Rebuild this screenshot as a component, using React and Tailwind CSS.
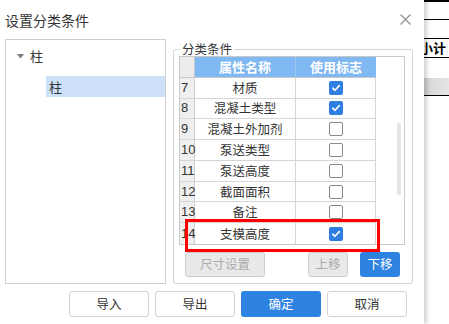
import React from 'react';

const rows = [
  { no: 7, name: '材质', used: true },
  { no: 8, name: '混凝土类型', used: true },
  { no: 9, name: '混凝土外加剂', used: false },
  { no: 10, name: '泵送类型', used: false },
  { no: 11, name: '泵送高度', used: false },
  { no: 12, name: '截面面积', used: false },
  { no: 13, name: '备注', used: false },
  { no: 14, name: '支模高度', used: true },
];

const cjk = { fontFamily: '"Noto Sans CJK SC", "Microsoft YaHei", sans-serif' };

const CheckBox = ({ checked }) =>
  checked ? (
    <div className="w-[14px] h-[14px] rounded-[2px] bg-[#2f7fe3] flex items-center justify-center">
      <svg width="10" height="10" viewBox="0 0 10 10">
        <path d="M1.8 5.2 L4 7.3 L8.3 2.6" stroke="white" strokeWidth="1.6" fill="none" strokeLinecap="round" strokeLinejoin="round" />
      </svg>
    </div>
  ) : (
    <div className="w-[14px] h-[14px] rounded-[2px] bg-white border border-[#8a8a8a]" />
  );

const App = () => {
  return (
    <div className="w-[449px] h-[324px] flex overflow-hidden bg-white text-[#333]" style={cjk}>
      {/* 对话框 */}
      <div className="relative z-10 w-[424px] h-[324px] shrink-0 bg-white flex flex-col shadow-[3px_0_4px_rgba(0,0,0,0.18)]">
        <div className="h-[39px] flex items-center justify-between pl-[5px] pr-[13px]">
          <span className="text-[14px] leading-[14px] text-[#333]">设置分类条件</span>
          <svg width="11" height="11" viewBox="0 0 11 11">
            <path d="M0.5 0.5 L10.5 10.5 M10.5 0.5 L0.5 10.5" stroke="#8c8c8c" strokeWidth="1.1" />
          </svg>
        </div>

        <div className="flex h-[245px]">
          {/* 左侧树 */}
          <div className="ml-[5px] w-[161px] h-full border border-[#cfcfcf] pt-[9px]">
            <div className="flex items-center h-[14px]">
              <svg width="7" height="5" viewBox="0 0 7 5" className="ml-[11px]">
                <path d="M0 0 L7 0 L3.5 4.5 Z" fill="#7a7a7a" />
              </svg>
              <span className="ml-[6px] text-[13px] leading-[14px]">柱</span>
            </div>
            <div className="ml-[40px] mt-[13px] h-[21px] bg-[#cce1f8] flex items-center pl-[3px]">
              <span className="text-[13px] leading-[14px]">柱</span>
            </div>
          </div>

          {/* 分类条件 */}
          <div className="ml-[7px] mt-[10px] w-[240px] h-[235px] border border-[#d4d4d4] rounded-[3px] pt-[6px] pl-[5px]">
            <div className="w-[226px] h-[189px] border border-[#c9c9c9] flex">
              <div className="w-[196px] flex flex-col">
                <div className="flex h-[21px] border-b border-[#c9c9c9]">
                  <div className="w-[15px] bg-[#ececec] border-r border-[#c9c9c9]" />
                  <div className="w-[101px] bg-[#7fb8f2] border-r border-[#9cc6f0] flex items-center justify-center text-white font-bold text-[13px] leading-[14px]">属性名称</div>
                  <div className="w-[80px] bg-[#7fb8f2] flex items-center justify-center text-white font-bold text-[13px] leading-[14px]">使用标志</div>
                </div>
                {rows.map((r) => (
                  <div key={r.no} className="flex h-[21px] border-b border-[#d6d6d6] last:border-b-0">
                    <div className="w-[15px] bg-[#efefef] border-r border-[#cfcfcf] flex items-center pl-[1px] text-[13px] leading-[14px] overflow-visible whitespace-nowrap" style={{ fontFamily: '"Liberation Sans", Arial, sans-serif' }}>
                      {r.no}
                    </div>
                    <div className="w-[101px] border-r border-[#d6d6d6] flex items-center justify-center text-[12.5px] leading-[14px] whitespace-nowrap">{r.name}</div>
                    <div className="w-[80px] border-r border-[#d6d6d6] flex items-center justify-center">
                      <CheckBox checked={r.used} />
                    </div>
                  </div>
                ))}
              </div>
              <div className="flex-1 pl-[21px] pt-[66px]">
                <div className="w-[4px] h-[72px] rounded-full bg-[#e4e4e4]" />
              </div>
            </div>

            <div className="flex mt-[7px] h-[25px] text-[12.5px]">
              <div className="ml-[6px] w-[80px] h-[25px] rounded-[3px] border border-[#cdcdcd] bg-[#e9e9e9] text-[#ababab] flex items-center justify-center">尺寸设置</div>
              <div className="ml-[43px] w-[40px] h-[25px] rounded-[3px] border border-[#cdcdcd] bg-[#e9e9e9] text-[#ababab] flex items-center justify-center">上移</div>
              <div className="ml-[12px] w-[40px] h-[25px] rounded-[3px] bg-[#2f83e0] text-white flex items-center justify-center">下移</div>
            </div>
          </div>
        </div>

        <div className="flex mt-[7px] pl-[69px] gap-[6px] text-[12.5px]">
          <div className="w-[80px] h-[26px] rounded-[3px] border border-[#d2d2d2] flex items-center justify-center">导入</div>
          <div className="w-[80px] h-[26px] rounded-[3px] border border-[#d2d2d2] flex items-center justify-center">导出</div>
          <div className="w-[80px] h-[26px] rounded-[3px] bg-[#2f83e0] text-white flex items-center justify-center">确定</div>
          <div className="w-[80px] h-[26px] rounded-[3px] border border-[#d2d2d2] flex items-center justify-center">取消</div>
        </div>

        {/* 分组标题 */}
        <div className="absolute left-[180px] top-[42px] bg-white px-[2px] text-[12.5px] leading-[13px]">分类条件</div>

        {/* 红框标注 */}
        <div className="absolute left-[185px] top-[219px] w-[195px] h-[33px] border-[3px] border-[#ff0000]" />
      </div>

      {/* 背景表格 */}
      <div className="flex-1 flex flex-col">
        <div className="h-[2px] bg-black" />
        <div className="h-[18px] border-b border-black" />
        <div className="h-[19px] border-b border-black" />
        <div className="h-[19px] border-b border-black flex items-center">
          <span className="-ml-[4px] text-[13px] leading-[14px] font-bold text-black whitespace-nowrap">小计</span>
        </div>
        <div className="h-[20px]" />
        <div className="h-[18px] bg-gradient-to-r from-[#d4d4d4] to-[#e6e6e6] border-b border-black" />
      </div>
    </div>
  );
};

export default App;
